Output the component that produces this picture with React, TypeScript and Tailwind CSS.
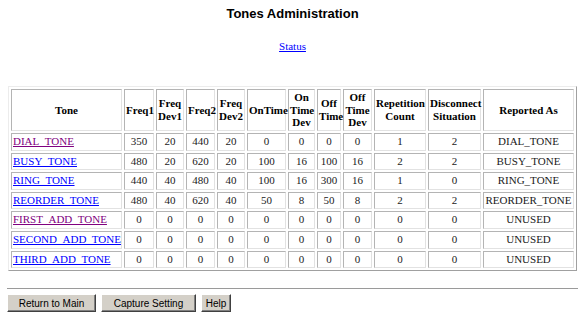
import React from "react";

type Tone = {
  name: string;
  visited?: boolean;
  vals: number[];
  reported: string;
};

const tones: Tone[] = [
  { name: "DIAL_TONE", visited: true, vals: [350, 20, 440, 20, 0, 0, 0, 0, 1, 2], reported: "DIAL_TONE" },
  { name: "BUSY_TONE", vals: [480, 20, 620, 20, 100, 16, 100, 16, 2, 2], reported: "BUSY_TONE" },
  { name: "RING_TONE", vals: [440, 40, 480, 40, 100, 16, 300, 16, 1, 0], reported: "RING_TONE" },
  { name: "REORDER_TONE", vals: [480, 40, 620, 40, 50, 8, 50, 8, 2, 2], reported: "REORDER_TONE" },
  { name: "FIRST_ADD_TONE", visited: true, vals: [0, 0, 0, 0, 0, 0, 0, 0, 0, 0], reported: "UNUSED" },
  { name: "SECOND_ADD_TONE", vals: [0, 0, 0, 0, 0, 0, 0, 0, 0, 0], reported: "UNUSED" },
  { name: "THIRD_ADD_TONE", vals: [0, 0, 0, 0, 0, 0, 0, 0, 0, 0], reported: "UNUSED" },
];

// header label lines + fixed column width
const columns: [string[], string][] = [
  [["Tone"], "w-[111px]"],
  [["Freq1"], "w-[30px]"],
  [["Freq", "Dev1"], "w-[28px]"],
  [["Freq2"], "w-[29px]"],
  [["Freq", "Dev2"], "w-[28px]"],
  [["OnTime"], "w-[39px]"],
  [["On", "Time", "Dev"], "w-[27px]"],
  [["Off", "Time"], "w-[24px]"],
  [["Off", "Time", "Dev"], "w-[29px]"],
  [["Repetition", "Count"], "w-[52px]"],
  [["Disconnect", "Situation"], "w-[53px]"],
  [["Reported As"], "w-[91px]"],
];

const cell =
  "border border-solid border-t-[#b4b4b4] border-l-[#b4b4b4] border-b-[#e2e2e2] border-r-[#e2e2e2] p-px";

function Button({ label, w }: { label: string; w: string }) {
  return (
    <button
      className={`${w} h-[18px] bg-[#d4d0c8] text-[10px] text-black border border-solid border-t-white border-l-white border-b-[#404040] border-r-[#404040] shadow-[inset_-1px_-1px_0_#808080]`}
      style={{ fontFamily: '"Liberation Sans", Arial, sans-serif' }}
    >
      {label}
    </button>
  );
}

export default function App() {
  return (
    <div className="w-[585px] h-[320px] bg-white overflow-hidden text-black">
      <h1
        className="pt-[6px] text-center font-bold text-[13px] leading-[15px]"
        style={{ fontFamily: '"Liberation Sans", Arial, sans-serif' }}
      >
        Tones Administration
      </h1>

      <div
        className="mt-[19px] text-center text-[11px] leading-[13px]"
        style={{ fontFamily: '"Liberation Serif", "Times New Roman", serif' }}
      >
        <a href="#status" className="text-[#0000ff] underline">
          Status
        </a>
      </div>

      <div className="px-[8px] mt-[33px]">
        <table
          className="w-full table-fixed border-separate border-spacing-[2px] border border-solid border-t-[#ececec] border-l-[#ececec] border-b-[#a0a0a0] border-r-[#a0a0a0] text-[#1a1a1a]"
          style={{ fontFamily: '"Liberation Serif", "Times New Roman", serif' }}
        >
          <thead>
            <tr>
              {columns.map(([lines, w], i) => (
                <th key={i} className={`${cell} ${w} h-[42px] font-bold text-[11px] leading-[12.65px] text-center align-middle text-black`}>
                  {lines.map((l, j) => (
                    <div key={j} className="whitespace-nowrap">
                      {l}
                    </div>
                  ))}
                </th>
              ))}
            </tr>
          </thead>
          <tbody>
            {tones.map((t) => (
              <tr key={t.name}>
                <td className={`${cell} text-[11px] leading-[13.6px] text-left whitespace-nowrap`}>
                  <a
                    href={`#${t.name}`}
                    className={`underline ${t.visited ? "text-[#800080]" : "text-[#0000ff]"}`}
                  >
                    {t.name}
                  </a>
                </td>
                {t.vals.map((v, i) => (
                  <td key={i} className={`${cell} text-[11px] leading-[13.6px] text-center`}>
                    {v}
                  </td>
                ))}
                <td className={`${cell} text-[11px] leading-[13.6px] text-center whitespace-nowrap`}>
                  {t.reported}
                </td>
              </tr>
            ))}
          </tbody>
        </table>
      </div>

      <hr className="mx-[7px] mt-[17px] border-0 border-t border-solid border-t-[#9a9a9a] h-0" />

      <div className="flex gap-[5px] px-[7px] mt-[5px]">
        <Button label="Return to Main" w="w-[89px]" />
        <Button label="Capture Setting" w="w-[95px]" />
        <Button label="Help" w="w-[30px]" />
      </div>
    </div>
  );
}
